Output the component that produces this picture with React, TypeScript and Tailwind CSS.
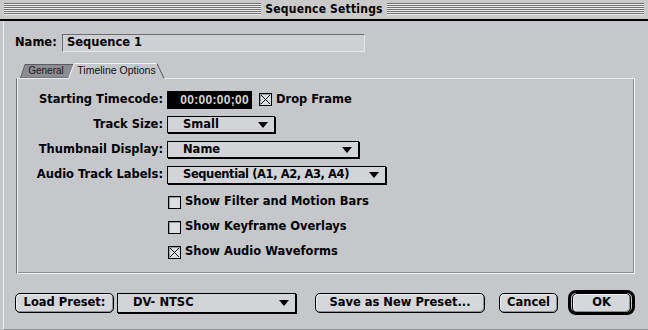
import React from "react";

const ui = "font-['DejaVu_Sans',Verdana,sans-serif] font-bold text-[11.5px] text-black";

function Arrow() {
  return (
    <svg width="10" height="6" viewBox="0 0 10 6">
      <polygon points="0,0 10,0 5,6" fill="#000" />
    </svg>
  );
}

function Popup({ label, className }: { label: string; className: string }) {
  return (
    <div
      className={`${className} flex items-center justify-between border border-black bg-[#d3d4d8] pl-[15px] pr-[6px] shadow-[1px_1px_0_#000]`}
    >
      <span className="leading-none">{label}</span>
      <Arrow />
    </div>
  );
}

function Check({ checked }: { checked?: boolean }) {
  return (
    <div className="flex h-[13px] w-[13px] items-center justify-center border border-black bg-[#dcdde1] shadow-[inset_1px_1px_0_#9a9b9f]">
      {checked && (
        <svg width="11" height="11" viewBox="0 0 11 11">
          <line x1="1" y1="1" x2="10" y2="10" stroke="#000" strokeWidth="1" />
          <line x1="10" y1="1" x2="1" y2="10" stroke="#000" strokeWidth="1" />
        </svg>
      )}
    </div>
  );
}

function Button({ label, className }: { label: string; className: string }) {
  return (
    <div
      className={`${className} flex h-[20px] items-center justify-center rounded-[5px] border border-black bg-[#d6d7db] shadow-[inset_-1px_-1px_0_#8e8f93,inset_1px_1px_0_#eeeef0]`}
    >
      <span className="leading-none">{label}</span>
    </div>
  );
}

const stripes =
  "h-[12px] flex-1 bg-[repeating-linear-gradient(to_bottom,#727272_0px,#727272_1px,#ececec_1px,#ececec_2px)]";

export default function App() {
  return (
    <div className={`${ui} flex h-[330px] w-[648px] flex-col overflow-hidden bg-[#c6c7cb]`}>
      {/* title bar */}
      <div className="flex h-[21px] shrink-0 items-center border-b-2 border-black bg-[#cacaca] px-[4px] pb-[1px]">
        <div className={stripes} />
        <span className="px-[4px] font-['DejaVu_Sans_Condensed','DejaVu_Sans',sans-serif] text-[12px] leading-none tracking-[0.2px]">
          Sequence Settings
        </span>
        <div className={stripes} />
      </div>

      <div className="ml-[3px] flex flex-1 flex-col border-l border-b border-l-[#eaeaec] border-b-[#8e8f93]">
        {/* name row */}
        <div className="mt-[13px] flex h-[18px] items-center">
          <span className="ml-[11px] w-[47px] leading-none">Name:</span>
          <div className="flex h-[18px] w-[303px] items-center border border-t-[#6c6d71] border-l-[#6c6d71] border-r-[#e8e8ea] border-b-[#e8e8ea] bg-[#cfd0d4] pl-[4px]">
            <span className="leading-none">Sequence 1</span>
          </div>
        </div>

        {/* tabs */}
        <div className="mt-[10px] flex h-[16px] items-end pl-[16px]">
          <div className="relative flex h-[14px] w-[56px] items-center justify-center pr-[4px]">
            <svg className="absolute inset-0" width="56" height="14" viewBox="0 0 56 14">
              <polygon points="0.5,14 5,0.5 56,0.5 56,14" fill="#8c8d92" stroke="#5d5e62" strokeWidth="1" />
            </svg>
            <span className="relative font-['Liberation_Sans',Arial,sans-serif] font-normal text-[10px] leading-none text-[#1c1c1c]">
              General
            </span>
          </div>
          <div className="relative z-10 -mb-px ml-[-8px] flex h-[17px] w-[97px] items-center justify-center pb-px">
            <svg className="absolute inset-0" width="97" height="17" viewBox="0 0 97 17">
              <polygon points="0,17 6,1 89,1 96,17" fill="#c6c7cb" />
              <polyline points="0.5,17 6.3,1.5 89,1.5" fill="none" stroke="#f2f2f4" strokeWidth="1" />
              <polyline points="89,1.5 96,16.5" fill="none" stroke="#55565a" strokeWidth="1" />
            </svg>
            <span className="relative font-['Liberation_Sans',Arial,sans-serif] font-normal text-[10.5px] leading-none text-[#111]">
              Timeline Options
            </span>
          </div>
        </div>

        {/* panel */}
        <div className="ml-[12px] flex h-[196px] w-[619px] flex-col border border-t-[#ececee] border-l-[#6e6f73] border-r-[#f4f4f6] border-b-[#f4f4f6] pt-[11px] shadow-[inset_1px_0_0_#f4f4f6,inset_-1px_-1px_0_#8a8b8f]">
          <div className="grid grid-cols-[146px_1fr] gap-x-[4px] gap-y-[6px]">
            <div className="flex h-[19px] items-center justify-end leading-none">Starting Timecode:</div>
            <div className="flex h-[19px] items-center">
              <div className="flex h-[18px] w-[85px] items-center justify-end bg-black pr-[3px]">
                <span className="font-['Liberation_Sans',Arial,sans-serif] text-[12px] leading-none text-[#d6d6d6] tracking-[0.3px]">
                  00:00:00;00
                </span>
              </div>
              <div className="ml-[7px] mr-[4px]">
                <Check checked />
              </div>
              <span className="leading-none">Drop Frame</span>
            </div>

            <div className="flex h-[19px] items-center justify-end leading-none">Track Size:</div>
            <div className="flex h-[19px] items-center">
              <Popup label="Small" className="h-[17px] w-[108px]" />
            </div>

            <div className="flex h-[19px] items-center justify-end leading-none">Thumbnail Display:</div>
            <div className="flex h-[19px] items-center">
              <Popup label="Name" className="h-[17px] w-[192px]" />
            </div>

            <div className="flex h-[19px] items-center justify-end leading-none">Audio Track Labels:</div>
            <div className="flex h-[19px] items-center">
              <div className="flex h-[18px] w-[219px] items-center justify-between border border-black bg-[#d3d4d8] pl-[15px] pr-[6px] shadow-[1px_1px_0_#000]">
                <span className="leading-none tracking-[-0.4px]">Sequential (A1, A2, A3, A4)</span>
                <Arrow />
              </div>
            </div>
          </div>

          <div className="mt-[11px] flex flex-col gap-[11px] pl-[151px]">
            <div className="flex h-[14px] items-center gap-[4px]">
              <Check />
              <span className="leading-none">Show Filter and Motion Bars</span>
            </div>
            <div className="flex h-[14px] items-center gap-[4px]">
              <Check />
              <span className="leading-none">Show Keyframe Overlays</span>
            </div>
            <div className="flex h-[14px] items-center gap-[4px]">
              <Check checked />
              <span className="leading-none">Show Audio Waveforms</span>
            </div>
          </div>
        </div>

        {/* bottom buttons */}
        <div className="mt-[16px] flex h-[25px] items-center pl-[11px]">
          <Button label="Load Preset:" className="w-[99px]" />
          <Popup label="DV- NTSC" className="ml-[3px] h-[20px] w-[179px]" />
          <Button label="Save as New Preset..." className="ml-[19px] w-[170px]" />
          <Button label="Cancel" className="ml-[14px] w-[59px]" />
          <div className="ml-[10px] flex h-[25px] w-[67px] items-center justify-center rounded-[8px] border-[3px] border-black p-[1px]">
            <Button label="OK" className="h-[17px] w-full" />
          </div>
        </div>
      </div>
    </div>
  );
}
